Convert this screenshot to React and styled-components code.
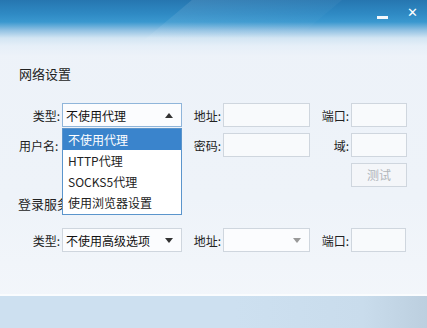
import React from 'react';
import styled, { createGlobalStyle } from 'styled-components';

const GlobalStyle = createGlobalStyle`
  html, body {
    margin: 0;
    padding: 0;
  }
  body {
    font-family: "Noto Sans CJK SC", "Noto Sans", sans-serif;
    font-size: 12px;
    color: #222;
  }
`;

const proxyOptions = ['不使用代理', 'HTTP代理', 'SOCKS5代理', '使用浏览器设置'];

const App = () => {
  return (
    <Window>
      <GlobalStyle />
      <TitleBar>
        <Streak />
        <Controls>
          <MinButton />
          <CloseButton>✕</CloseButton>
        </Controls>
      </TitleBar>
      <Body>
        <SectionTitle>网络设置</SectionTitle>
        <FormGrid>
          <Label>类型:</Label>
          <SelectWrap>
            <Select $focused>
              <span>不使用代理</span>
              <Arrow $up />
            </Select>
            <DropList>
              {proxyOptions.map((text, idx) => (
                <DropItem key={idx} $active={idx === 0}>{text}</DropItem>
              ))}
            </DropList>
          </SelectWrap>
          <Label>地址:</Label>
          <Input />
          <Label>端口:</Label>
          <Input />

          <Label $left>用户名:</Label>
          <div />
          <Label>密码:</Label>
          <Input />
          <Label>域:</Label>
          <Input />

          <Spacer />
          <TestButton>测试</TestButton>
        </FormGrid>
        <SubTitle>登录服务</SubTitle>
        <FormGrid>
          <Label>类型:</Label>
          <Select>
            <span>不使用高级选项</span>
            <Arrow />
          </Select>
          <Label>地址:</Label>
          <Select>
            <span />
            <Arrow $muted />
          </Select>
          <Label>端口:</Label>
          <Input $narrow />
        </FormGrid>
      </Body>
      <Footer />
    </Window>
  );
};

export default App;

const Window = styled.div`
  width: 427px;
  height: 328px;
  display: flex;
  flex-direction: column;
  overflow: hidden;
  background: linear-gradient(180deg, #edf2f9 0%, #eef3f9 60%, #f4f7fb 100%);
`;

const TitleBar = styled.div`
  position: relative;
  height: 56px;
  flex-shrink: 0;
  background: linear-gradient(
    180deg,
    #2676b0 0px,
    #2f8ac4 14px,
    #3a98cf 22px,
    #8fc0e2 30px,
    #d2e5f3 38px,
    #e6eff8 46px,
    #edf2f9 56px
  );
  overflow: hidden;
`;

const Streak = styled.div`
  position: absolute;
  left: 180px;
  top: -20px;
  width: 150px;
  height: 60px;
  background: linear-gradient(160deg, rgba(255, 255, 255, 0.12), rgba(255, 255, 255, 0));
  transform: skewX(-50deg);
`;

const Controls = styled.div`
  position: absolute;
  right: 9px;
  top: 5px;
  display: flex;
  align-items: center;
  gap: 19px;
`;

const MinButton = styled.div`
  width: 11px;
  height: 3px;
  margin-top: 8px;
  background: #f4f8fc;
`;

const CloseButton = styled.div`
  color: #fff;
  font-family: "DejaVu Sans", sans-serif;
  font-size: 13px;
  font-weight: bold;
  line-height: 16px;
`;

const Body = styled.div`
  flex: 1;
  padding: 9px 0 0 19px;
`;

const SectionTitle = styled.div`
  font-size: 13px;
  color: #222;
  line-height: 18px;
  margin-bottom: 20px;
`;

const SubTitle = styled.div`
  font-size: 13px;
  color: #222;
  line-height: 18px;
  margin: 8px 0 15px -1px;
`;

const FormGrid = styled.div`
  display: grid;
  grid-template-columns: 43px 120px 41px 87px 41px 56px;
  grid-auto-rows: 24px;
  row-gap: 6px;
  align-items: center;
`;

const Label = styled.div`
  text-align: ${({ $left }) => ($left ? 'left' : 'right')};
  padding-right: 2px;
  color: #222;
  white-space: nowrap;
`;

const Input = styled.div`
  height: 22px;
  width: ${({ $narrow }) => ($narrow ? '53px' : 'auto')};
  border: 1px solid #cfd6de;
  background: #f8fafc;
`;

const SelectWrap = styled.div`
  position: relative;
  z-index: 2;
`;

const Select = styled.div`
  height: 22px;
  display: flex;
  align-items: center;
  justify-content: space-between;
  padding: 0 8px 0 3px;
  border: 1px solid ${({ $focused }) => ($focused ? '#8fb5da' : '#cfd6de')};
  background: #fbfcfe;
  color: #111;
`;

const Arrow = styled.div`
  width: 0;
  height: 0;
  border-left: 4.5px solid transparent;
  border-right: 4.5px solid transparent;
  ${({ $up, $muted }) =>
    $up
      ? 'border-bottom: 5px solid #333;'
      : `border-top: 5px solid ${$muted ? '#999' : '#333'};`}
`;

const DropList = styled.div`
  position: absolute;
  top: 25px;
  left: 0;
  right: 0;
  border: 1px solid #5b95cc;
  background: #fff;
  padding: 0 0 1px;
`;

const DropItem = styled.div`
  height: 21px;
  line-height: 21px;
  padding-left: 5px;
  color: ${({ $active }) => ($active ? '#fff' : '#222')};
  background: ${({ $active }) => ($active ? '#3a84cc' : 'transparent')};
  white-space: nowrap;
`;

const Spacer = styled.div`
  grid-column: 1 / 6;
`;

const TestButton = styled.div`
  height: 22px;
  line-height: 22px;
  text-align: center;
  border: 1px solid #cfd6de;
  background: #f4f6f9;
  color: #b0b5ba;
`;

const Footer = styled.div`
  height: 32px;
  flex-shrink: 0;
  border-top: 2px solid #fafcfe;
  background: linear-gradient(90deg, #cde0f0 0%, #cde0f0 55%, #c9dcec 85%, #bccfdf 100%);
`;
